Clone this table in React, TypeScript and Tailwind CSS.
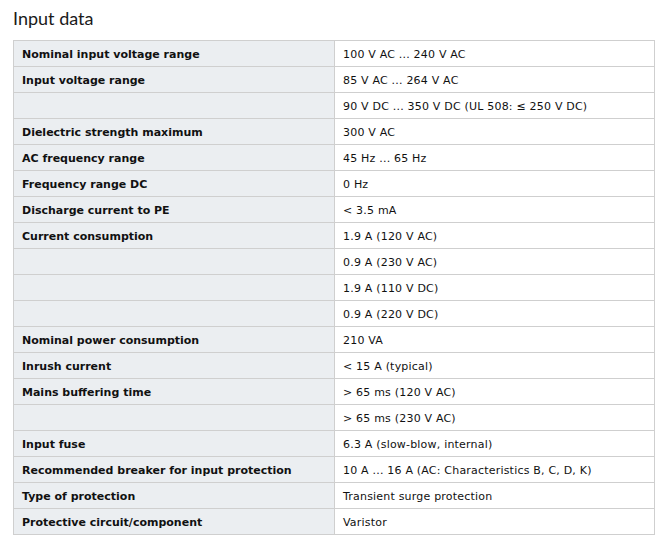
import React from "react";

const rows: [string, string][] = [
  ["Nominal input voltage range", "100 V AC ... 240 V AC"],
  ["Input voltage range", "85 V AC ... 264 V AC"],
  ["", "90 V DC ... 350 V DC (UL 508: ≤ 250 V DC)"],
  ["Dielectric strength maximum", "300 V AC"],
  ["AC frequency range", "45 Hz ... 65 Hz"],
  ["Frequency range DC", "0 Hz"],
  ["Discharge current to PE", "< 3.5 mA"],
  ["Current consumption", "1.9 A (120 V AC)"],
  ["", "0.9 A (230 V AC)"],
  ["", "1.9 A (110 V DC)"],
  ["", "0.9 A (220 V DC)"],
  ["Nominal power consumption", "210 VA"],
  ["Inrush current", "< 15 A (typical)"],
  ["Mains buffering time", "> 65 ms (120 V AC)"],
  ["", "> 65 ms (230 V AC)"],
  ["Input fuse", "6.3 A (slow-blow, internal)"],
  ["Recommended breaker for input protection", "10 A ... 16 A (AC: Characteristics B, C, D, K)"],
  ["Type of protection", "Transient surge protection"],
  ["Protective circuit/component", "Varistor"],
];

export default function App() {
  return (
    <div className="bg-white w-[669px] h-[553px] pl-[13px] pt-[6px]">
      <h2 className="text-[18px] leading-[24px] text-[#1a1a1a] font-['Lato',sans-serif]">Input data</h2>
      <table className="mt-[10px] w-[642px] border-collapse text-[11px] leading-[14px] font-['DejaVu_Sans','Verdana',sans-serif] text-[#111]">
        <tbody>
          {rows.map(([k, v], i) => (
            <tr key={i} className="h-[26px]">
              <td className="w-[321px] border border-[#cfcfcf] bg-[#ebeef1] px-[8px] pt-[7px] pb-0 font-bold align-top">{k}</td>
              <td className="border border-[#cfcfcf] bg-white px-[8px] pt-[7px] pb-0 align-top tracking-[0.2px]">{v}</td>
            </tr>
          ))}
        </tbody>
      </table>
    </div>
  );
}
